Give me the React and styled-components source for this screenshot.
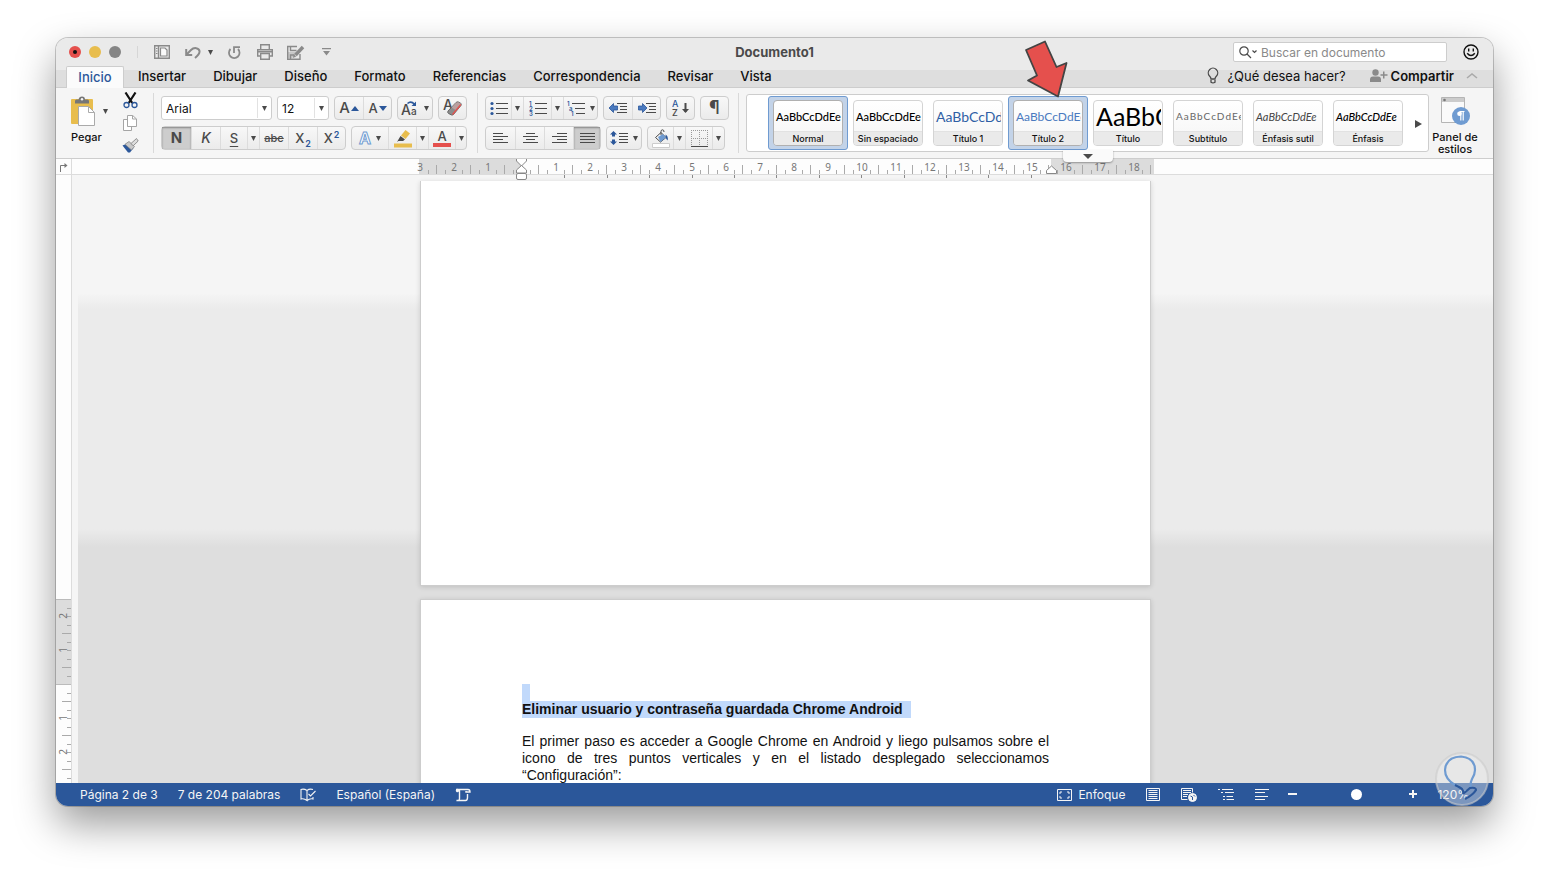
import React from 'react'
import styled, { createGlobalStyle, css } from 'styled-components'

const colors = {
  blue: '#2b579a',
  light: '#6f9bd1',
  ink: '#4a4a4a',
  grey: '#8a8a8a',
  line: '#cdcdcd',
  yellow: '#e8bd4d',
  red: '#e5504d',
}

const GlobalStyle = createGlobalStyle`
  * { box-sizing: border-box; }
  body {
    margin: 0;
    background: #fff;
    color: #111;
    font-family: Inter, "Liberation Sans", sans-serif;
  }
  button, input, select { font-family: inherit; }
  button {
    padding: 0;
    border: 0;
    background: none;
    color: inherit;
  }
  svg { display: block; flex: none; }
`

const Desktop = styled.div`
  display: flex;
  height: 100vh;
  padding: 38px 56px 74px;
`

const Window = styled.div`
  position: relative;
  display: flex;
  flex: 1;
  flex-direction: column;
  min-width: 0;
  overflow: hidden;
  border-radius: 12px;
  background: #f5f5f5;
  box-shadow: 0 0 0 1px rgba(0, 0, 0, 0.2), 0 18px 40px rgba(0, 0, 0, 0.4);
`

/* title bar */

const TitleBar = styled.header`
  display: grid;
  grid-template-columns: 1fr auto 1fr;
  align-items: center;
  height: 28px;
  background: #eaeaea;
`

const TitleLeft = styled.div`
  display: flex;
  align-items: center;
  padding-left: 13px;
`

const TitleRight = styled.div`
  display: flex;
  align-items: center;
  justify-content: flex-end;
  gap: 16px;
  padding-right: 14px;
`

const Lights = styled.div`
  display: flex;
  gap: 8px;
  padding-right: 16px;
  margin-right: 16px;
  border-right: 1px solid #d6d6d6;
`

const Light = styled.button`
  display: flex;
  align-items: center;
  justify-content: center;
  width: 12px;
  height: 12px;
  border-radius: 50%;
  background: ${props => props.$color};

  &::after {
    content: '';
    width: 4px;
    height: 4px;
    border-radius: 50%;
    background: ${props => (props.$dot ? '#111' : 'transparent')};
  }
`

const QuickBar = styled.div`
  display: flex;
  align-items: center;
  color: ${colors.grey};
`

const QuickButton = styled.button`
  display: flex;
  align-items: center;
  width: ${props => props.$w}px;
  height: 20px;
`

const DocTitle = styled.h1`
  margin: 0;
  color: ${colors.ink};
  font-size: 13px;
  font-weight: 700;
`

const SearchBox = styled.label`
  display: flex;
  align-items: center;
  gap: 4px;
  width: 214px;
  height: 20px;
  padding: 0 5px;
  border: 1px solid ${colors.line};
  border-radius: 2px;
  background: #fff;
`

const SearchInput = styled.input`
  flex: 1;
  min-width: 0;
  padding: 0;
  border: 0;
  outline: 0;
  background: none;
  font-size: 12px;

  &::placeholder { color: ${colors.grey}; }
`

/* tabs */

const TabBar = styled.nav`
  display: flex;
  align-items: stretch;
  height: 22px;
  padding: 0 15px 0 10px;
  border-bottom: 1px solid ${colors.line};
  background: linear-gradient(#eaeaea 4px, #dedede 4px);
`

const Tab = styled.a`
  display: flex;
  align-items: center;
  justify-content: center;
  padding: 0 14px 2px 13px;
  color: #111;
  font-size: 13px;
  font-weight: 500;
  text-decoration: none;

  ${props => props.$active && css`
    width: 58px;
    height: 22px;
    padding: 0 0 2px;
    margin-right: 1px;
    border: 1px solid ${colors.line};
    border-bottom: 0;
    border-radius: 2px 2px 0 0;
    background: #fbfbfb;
    color: ${colors.blue};
  `}
`

const TabTools = styled.div`
  display: flex;
  align-items: center;
  gap: 24px;
  margin-left: auto;
  padding-bottom: 2px;
`

const TabTool = styled.button`
  display: flex;
  align-items: center;
  gap: ${props => props.$gap}px;
  font-size: 13px;
  font-weight: ${props => (props.$strong ? 600 : 400)};
`

const ShareTools = styled.div`
  display: flex;
  align-items: center;
  gap: 12px;
`

/* ribbon */

const Ribbon = styled.section`
  position: relative;
  z-index: 2;
  display: flex;
  height: 71px;
  padding-right: 12px;
  border-bottom: 1px solid ${colors.line};
  background: #f5f5f5;
`

const Section = styled.div`
  display: flex;
  flex-direction: column;
  gap: 6px;
  padding: 8px ${props => props.$right}px 0 7px;
`

const Divider = styled.div`
  width: 1px;
  margin: 5px 0;
  background: #d9d9d9;
`

const Line = styled.div`
  display: flex;
  gap: 5px;
`

const Clipboard = styled.div`
  display: flex;
  align-items: flex-start;
  width: 97px;
  padding-left: 15px;
`

const BigButton = styled.button`
  display: flex;
  flex: none;
  flex-direction: column;
  align-items: ${props => props.$align || 'center'};
  align-self: flex-start;
  gap: 5px;
  width: ${props => props.$w}px;
  padding-top: 8px;
  font-size: 11px;
  font-weight: 500;
  line-height: 12px;
`

const PasteIcons = styled.span`
  display: flex;
  align-items: center;
  gap: 8px;
`

const ClipTools = styled.div`
  display: flex;
  flex-direction: column;
  align-items: center;
  width: 16px;
  gap: 6px;
  padding-top: 4px;
  margin-left: 14px;
`

const Field = styled.label`
  position: relative;
  display: flex;
  width: ${props => props.$w}px;
  height: 24px;
  align-items: center;
  border: 1px solid ${colors.line};
  border-radius: 3px;
  background: #fff;

  svg { position: absolute; right: 4px; pointer-events: none; }
`

const Select = styled.select`
  width: 100%;
  height: 100%;
  padding: 0 16px 0 4px;
  border: 0;
  outline: 0;
  appearance: none;
  background: linear-gradient(#e2e2e2, #e2e2e2) calc(100% - 13px) 50% / 1px 20px no-repeat;
  color: #111;
  font-size: 12px;
`

const Group = styled.div`
  display: flex;
  height: 24px;
  border: 1px solid ${colors.line};
  border-radius: 4px;
  background: linear-gradient(#f8f8f8, #ebebeb);
`

const Tool = styled.button`
  display: flex;
  align-items: center;
  justify-content: center;
  gap: ${props => (props.$tight ? 1 : 5)}px;
  width: ${props => props.$w}px;
  color: ${colors.ink};
  background: ${props => (props.$on ? '#cdcdcd' : 'none')};
  border-left: 1px solid #dcdcdc;
  box-shadow: ${props => (props.$on ? 'inset 0 1px 2px rgba(0, 0, 0, 0.35)' : 'none')};

  &:first-child { border-left: 0; }
`

const Glyph = styled.span`
  font-size: ${props => props.$size || 14}px;
  font-weight: ${props => props.$weight || 500};
  font-style: ${props => (props.$italic ? 'italic' : 'normal')};
  text-decoration: ${props => props.$line || 'none'};
  text-underline-offset: 3px;
  line-height: 16px;

  sub, sup {
    margin-left: 1px;
    color: ${colors.blue};
    font-size: 9px;
    font-weight: 600;
    line-height: 0;
  }
`

const ColorGlyph = styled.span`
  display: flex;
  flex-direction: column;
  align-items: center;
  width: 18px;
  border-bottom: 4px solid ${props => props.$color};
  font-size: 13px;
  font-weight: 500;
  line-height: 14px;
`

const Outlined = styled.span`
  color: #fff;
  font-size: 16px;
  font-weight: 700;
  line-height: 18px;
  -webkit-text-stroke: 1px ${colors.light};
`

/* style gallery */

const Gallery = styled.div`
  display: flex;
  flex: 1;
  min-width: 0;
  height: 58px;
  margin: 6px 0 0 7px;
  padding: 1px 0 0 21px;
  border: 1px solid ${colors.line};
  border-radius: 3px;
  background: #fff;
`

const Cell = styled.div`
  position: relative;
  flex: none;
  width: 80px;
  height: 54px;
  padding: 3px 4px;
  border: 1px solid ${props => (props.$on ? colors.light : 'transparent')};
  border-radius: 3px;
  background: ${props => (props.$on ? '#c3d3e8' : 'none')};
`

const Card = styled.button`
  display: flex;
  flex-direction: column;
  width: 70px;
  height: 46px;
  overflow: hidden;
  border: 1px solid ${props => (props.$on ? '#b0b0b0' : '#d4d4d4')};
  border-radius: 4px;
  background: linear-gradient(#fff, #f5f5f5);
`

const Preview = styled.span`
  display: flex;
  flex: none;
  align-items: center;
  width: 67px;
  height: 30px;
  padding-left: 2px;
  overflow: hidden;
  color: ${props => props.$color || '#000'};
  font-family: Lato, "Liberation Sans", sans-serif;
  font-size: ${props => props.$size || 11}px;
  font-weight: ${props => props.$weight || 400};
  font-style: ${props => (props.$italic ? 'italic' : 'normal')};
  letter-spacing: ${props => (props.$spaced ? '1px' : 'normal')};
  white-space: nowrap;
`

const CardName = styled.span`
  width: 100%;
  border-top: 1px solid #e2e2e2;
  background: #eaeaea;
  font-size: 9px;
  font-weight: 500;
  line-height: 14px;
  text-align: center;
  white-space: nowrap;
`

const MoreFlap = styled.button`
  position: absolute;
  top: 53px;
  left: 54px;
  display: flex;
  align-items: center;
  justify-content: center;
  width: 50px;
  height: 12px;
  border-radius: 0 0 4px 4px;
  background: #fafafa;
  box-shadow: 0 1px 2px rgba(0, 0, 0, 0.35);
`

const Pointer = styled.svg`
  position: absolute;
  top: -59px;
  left: 13px;
  z-index: 3;
`

const ScrollRight = styled.button`
  display: flex;
  align-items: center;
  justify-content: center;
  width: 20px;
`

/* rulers and pages */

const RulerRow = styled.div`
  position: relative;
  z-index: 1;
  display: grid;
  grid-template-columns: 16px 1fr;
  height: 16px;
  border-bottom: 1px solid #dcdcdc;
  background: #fdfdfd;
`

const RulerCorner = styled.div`
  display: flex;
  align-items: center;
  justify-content: center;
  border-right: 1px solid #dcdcdc;
`

const RulerTrack = styled.div`
  display: flex;
  justify-content: center;
  padding-left: 8px;
`

const RulerSvg = styled.svg`
  overflow: visible;
  font-family: "Noto Sans", sans-serif;
  font-size: 10px;
`

const Body = styled.div`
  display: grid;
  grid-template-columns: 16px 1fr;
  grid-template-rows: minmax(0, 1fr);
  flex: 1;
  min-height: 0;
`

const SideRuler = styled.div`
  overflow: hidden;
  border-right: 1px solid #dcdcdc;
  background: #fdfdfd;
`

const Canvas = styled.main`
  display: flex;
  flex-direction: column;
  align-items: center;
  gap: 13px;
  margin-left: 6px;
  padding-top: 6px;
  overflow: hidden;
  background: linear-gradient(#f5f5f5 118px, #ebebeb 134px, #ebebeb 354px, #dedede 372px);
`

const Page = styled.article`
  flex: none;
  width: 731px;
  height: ${props => props.$h}px;
  padding: 84px 101px;
  border: 1px solid ${colors.line};
  background: #fff;
  box-shadow: 0 1px 5px rgba(0, 0, 0, 0.14);
  color: #111;
  font-family: "Liberation Sans", Arial, sans-serif;
  font-size: 14px;
  line-height: 17px;

  &:first-child { border-top: 0; }
`

const EmptyLine = styled.div`
  width: 8px;
  height: 17px;
  background: #c1d9fb;
`

const Heading = styled.h2`
  margin: 0 0 15px;
  font-size: 14px;
  line-height: 17px;

  span {
    display: inline-block;
    padding-right: 8px;
    background: #c1d9fb;
  }
`

const Paragraph = styled.p`
  margin: 0;
  text-align: justify;
`

/* status bar */

const StatusBar = styled.footer`
  display: flex;
  align-items: center;
  justify-content: space-between;
  height: 23px;
  padding: 0 24px;
  background: ${colors.blue};
  color: #f5f5f5;
  font-size: 12px;
`

const StatusSide = styled.div`
  display: flex;
  align-items: center;
  gap: ${props => props.$gap}px;
`

const StatusButton = styled.button`
  display: flex;
  align-items: center;
  gap: 6px;
  font-size: 12px;
`

const Zoom = styled.div`
  display: flex;
  align-items: center;
  gap: 2px;
  margin: 0 -2px;
`

const ZoomSlider = styled.input`
  width: 108px;
  height: 12px;
  margin: 0;
  appearance: none;
  background: none;

  &::-webkit-slider-thumb {
    width: 11px;
    height: 11px;
    appearance: none;
    border-radius: 50%;
    background: #fff;
  }
`

const Badge = styled.svg`
  position: absolute;
  right: 4px;
  bottom: 0;
  z-index: 4;
`

/* icons */

const Caret = ({ w = 6, fill = colors.ink }) => (
  <svg width={w} height="5" viewBox="0 0 6 5" preserveAspectRatio="none"><path d="M0 0h6L3 5z" fill={fill} /></svg>
)

const Stroke = ({ w = 16, h = 16, color = 'currentColor', sw = 1.4, children }) => (
  <svg width={w} height={h} viewBox={`0 0 ${w} ${h}`} fill="none" stroke={color} strokeWidth={sw}>{children}</svg>
)

const SidebarIcon = () => (
  <Stroke w={16} h={14}>
    <path d="M.7.7h14.6v12.6H.7zM4.500 1v12" />
    <path d="M6.500 3h4.500l2 2v6H6.500z" fill="#fafafa" strokeWidth="1.200" />
    <path d="M2 3.500h1.500M2 6h1.500M2 8.500h1.500" strokeWidth="1" />
  </Stroke>
)

const UndoIcon = () => (
  <Stroke w={16} h={13} sw={2}>
    <path d="M2 8l4-4c3-3 8-2.200 8.500 1 .4 2.300-1.500 4.500-4.500 7" />
    <path d="M1.200 3v6h6" />
  </Stroke>
)

const RedoIcon = () => (
  <Stroke w={14} h={15} sw={1.8}>
    <path d="M3.500 4a5.300 5.300 0 1 0 7.500 0" />
    <path d="M7 8V2.200h6" />
  </Stroke>
)

const PrintIcon = () => (
  <Stroke w={16} h={16}>
    <path d="M3.700 5.500V.7h8.600v4.800M3.500 12H.7V5.700h14.600V12h-2.800M3.700 9.500h8.600v5.800H3.700z" />
    <path d="M1 7.800h14" strokeWidth="1.500" />
  </Stroke>
)

const SaveEditIcon = () => (
  <Stroke w={18} h={15}>
    <path d="M13 9v5.300H.7V1.500H10M3.500 1.500v4h6M3.500 14v-4h4" />
    <path d="M1 7h8l-4 6H1z" fill="currentColor" fillOpacity=".35" stroke="none" />
    <path d="M8.500 10l7.500-8" strokeWidth="3.400" />
    <path d="M6 12.500l1-3 2 2z" fill="currentColor" strokeWidth=".5" />
  </Stroke>
)

const PasteIcon = () => (
  <svg width="24" height="30" viewBox="0 0 24 30">
    <rect x="0" y="3" width="22" height="25" rx="1" fill={colors.yellow} />
    <path d="M4 7.500V5q0-1.500 1.500-1.500h2C8 1.500 9 .5 11 .5s3 1 3 3h2.500Q18 3.500 18 5v2.500z" fill="#777" />
    <circle cx="11" cy="3.200" r="1.200" fill="#f5f5f5" />
    <path d="M7.500 10.500h10l6 6v13h-16z" fill="#fff" stroke="#aaa" />
    <path d="M17.500 10.500v6h6" fill="none" stroke="#aaa" />
  </svg>
)

const CutIcon = () => (
  <svg width="15" height="17" viewBox="0 0 15 17" fill="none">
    <path d="M2.500.5l6.800 10.500M12.500.5L5.700 11" stroke="#111" strokeWidth="2.200" />
    <circle cx="3.500" cy="13" r="2.500" stroke={colors.blue} strokeWidth="1.300" />
    <circle cx="11.500" cy="13" r="2.500" stroke={colors.blue} strokeWidth="1.300" />
  </svg>
)

const CopyIcon = () => (
  <Stroke w={14} h={17} color="#a5a5a5" sw={1}>
    <path d="M.5 4.500H5v7h3.500V15.500H.5z" fill="#fff" />
    <path d="M4.500.5h5.200L13.500 4v7.500h-9z" fill="#fff" />
    <path d="M9.500.5V4h4" />
  </Stroke>
)

const BrushIcon = () => (
  <svg width="17" height="15" viewBox="0 0 17 15">
    <path d="M.5 7.500l6-2.500 5 5-3.500 4.500H6z" fill={colors.blue} />
    <path d="M3 6.300l4-2.800 5.500 5L9.500 12z" fill="#c9c9c9" stroke="#888" strokeWidth=".8" />
    <path d="M9 5.500l5.500-5L16.200 3l-5 4.800z" fill="#ddd" stroke="#888" strokeWidth=".9" />
  </svg>
)

const GrowIcon = ({ down }) => (
  <svg width="8" height="5" viewBox="0 0 8 5"><path d={down ? 'M0 0h8L4 5z' : 'M0 5h8L4 0z'} fill={colors.blue} /></svg>
)

const CaseIcon = () => (
  <svg width="18" height="17" viewBox="0 0 18 17" fill={colors.ink}>
    <text x="0" y="15" fontSize="14" fontWeight="500">A</text>
    <text x="10" y="15" fontSize="10" fontWeight="500">a</text>
    <path d="M6.500 3.500q3.500-3 7 .8" fill="none" stroke={colors.blue} strokeWidth="1.600" />
    <path d="M15 1.500v4.500h-4.500z" fill={colors.blue} />
  </svg>
)

const EraserIcon = () => (
  <svg width="22" height="20" viewBox="0 0 22 20">
    <text x="1" y="12" fontSize="14" fontWeight="500" fill={colors.ink}>A</text>
    <path d="M6 13l8-8.500q1-1 2.500-.5l2 1q1.300 1 .5 2.500l-7.500 9q-.8.800-2 .5l-3-1.500Q5 14.300 6 13z" fill="#8c8c8c" stroke="#555" strokeWidth=".8" />
    <path d="M9.500 9.500L14 4.800q1-1 2.500-.5l2 1q1.200 1 .3 2.200l-4.300 5z" fill="#b9a0a0" />
    <path d="M10.500 16.500l8.300-10" stroke={colors.red} strokeWidth="1.200" />
  </svg>
)

const PenIcon = () => (
  <svg width="18" height="19" viewBox="0 0 18 19">
    <path d="M7 6.500L11.500 1l4.500 3.500-4.500 5.500z" fill={colors.yellow} />
    <path d="M6.500 7l4.500 3.500-2 1.500H4.500l-1.500 1z" fill={colors.ink} />
    <path d="M0 14.500h18v4H0z" fill={colors.yellow} />
  </svg>
)

const ListIcon = ({ kind }) => (
  <svg width="18" height="15" viewBox="0 0 18 15" fill={colors.blue} fontSize="6" fontWeight="600">
    {kind === 'bullet' && [2, 7, 12].map(y => <circle key={y} cx="2" cy={y + 0.5} r="1.600" />)}
    {kind === 'number' && [1, 2, 3].map(n => <text key={n} x="0" y={n * 5 - 0.5}>{n}</text>)}
    {kind === 'multi' && (
      <>
        <text x="0" y="4.500">1</text>
        <text x="2" y="9.500">a</text>
        <text x="4" y="15">1</text>
      </>
    )}
    <path
      d={kind === 'multi' ? 'M5 2.500h13M8 7.500h10M9 12.500h9' : 'M6 2.500h12M6 7.500h12M6 12.500h12'}
      stroke={colors.ink}
      strokeWidth="1"
    />
  </svg>
)

const IndentIcon = ({ right }) => (
  <svg width="18" height="12" viewBox="0 0 18 12">
    <path d={right ? 'M9 6L4.500 1.500V4H.5v4h4v2.500z' : 'M0 6l4.500-4.500V4h4v4h-4v2.500z'} fill="#4a7abf" stroke={colors.blue} strokeWidth=".8" />
    <path d="M8 1.500h10M11 4.500h7M11 7.500h7M8 10.500h10" stroke={colors.ink} />
  </svg>
)

const SortIcon = () => (
  <svg width="17" height="18" viewBox="0 0 17 18">
    <text x="0" y="8" fontSize="9" fontWeight="500" fill={colors.blue}>A</text>
    <text x="0" y="17" fontSize="9" fontWeight="500" fill={colors.ink}>Z</text>
    <path d="M13.500 4v9" stroke={colors.ink} strokeWidth="2" />
    <path d="M10 10h7l-3.500 4z" fill={colors.ink} />
  </svg>
)

const alignPaths = {
  left: 'M0 1.500h10M0 4.500h15M0 7.500h10M0 10.500h15',
  center: 'M3 1.500h9M0 4.500h15M3 7.500h9M0 10.500h15',
  right: 'M5 1.500h10M0 4.500h15M5 7.500h10M0 10.500h15',
  justify: 'M0 1.500h15M0 4.500h15M0 7.500h15M0 10.500h15',
}

const AlignIcon = ({ kind }) => (
  <Stroke w={15} h={12} sw={1}><path d={alignPaths[kind]} /></Stroke>
)

const SpacingIcon = () => (
  <svg width="18" height="14" viewBox="0 0 18 14">
    <path d="M3.500 0L7 3.500H5v2H2v-2H0zM3.500 14L7 10.500H5v-2H2v2H0z" fill={colors.blue} />
    <path d="M9 2.500h9M9 5.500h9M9 8.500h9M9 11.500h9" stroke={colors.ink} />
  </svg>
)

const BucketIcon = () => (
  <svg width="18" height="19" viewBox="0 0 18 19">
    <path d="M3.500 8.500l5.500-5 5 5-5.500 4.500z" fill="#f5f5f5" stroke={colors.ink} strokeWidth="1" />
    <path d="M6 8l5-3 3 3.500-5.500 4.500z" fill={colors.light} />
    <path d="M9 6V2.500Q9 .8 10.500.8T12 3" fill="none" stroke={colors.ink} />
    <path d="M13.500 5.500q3 1.500 2.200 6-1.700-1-2-3.500z" fill={colors.blue} />
    <path d="M.5 14.500h17v4H.5z" fill="#fff" stroke="#ccc" />
  </svg>
)

const BorderIcon = () => (
  <svg width="17" height="17" viewBox="0 0 17 17" fill="none">
    <path d="M.5 0v15M8.500 0v15M16.500 0v15M0 .5h17M0 8.500h17" stroke="#999" strokeDasharray="1 1" />
    <path d="M0 16.500h17" stroke={colors.ink} />
  </svg>
)

const StylesPaneIcon = () => (
  <svg width="30" height="30" viewBox="0 0 30 30">
    <path d="M1.500 1.500h23v25h-23z" fill="#fafafa" stroke="#b5b5b5" />
    <path d="M2 2h22v4H2z" fill="#ccc" />
    <circle cx="4.500" cy="4" r="1.300" fill="#777" />
    <circle cx="21" cy="20" r="9" fill={colors.light} />
    <path d="M19.500 15.500h5M20.800 15.500v9M23.200 15.500v9" stroke="#fff" strokeWidth="1.200" />
    <circle cx="19.500" cy="17.800" r="2.300" fill="#fff" />
  </svg>
)

const SearchIcon = () => (
  <Stroke w={18} h={13} color={colors.ink} sw={1.2}>
    <circle cx="5" cy="5" r="4.200" />
    <path d="M8 8l4 4M13.500 4.500l2 2 2-2" />
  </Stroke>
)

const SmileIcon = () => (
  <Stroke w={16} h={16} color="#111" sw={1.400}>
    <circle cx="8" cy="8" r="7" />
    <path d="M5.700 4.500v3M10.300 4.500v3M4.200 9.300q3.800 4.500 7.600 0" />
  </Stroke>
)

const BulbIcon = () => (
  <Stroke w={12} h={17} color={colors.ink} sw={1.300}>
    <path d="M4 12Q4 10.500 2.500 9A4.700 4.700 0 1 1 9.500 9Q8 10.500 8 12z" />
    <path d="M4 13v2.200q2 1.300 4 0V13" />
  </Stroke>
)

const ShareIcon = () => (
  <svg width="18" height="13" viewBox="0 0 18 13" fill={colors.grey}>
    <circle cx="5.500" cy="3.500" r="3.200" />
    <path d="M0 13v-2.500Q0 7.500 3 7.500h5q3 0 3 3V13zM13 2.500h1.500v7H13z" />
    <path d="M10.500 5.200h7v1.500h-7z" />
  </svg>
)

const BookIcon = () => (
  <Stroke w={16} h={14} sw={1.1}>
    <path d="M7 2.500Q4 .5 1 1.500v9.500q3-.8 6 1.500zM7 2.500Q9.500.5 13 1.500M7 12.500q3-2.300 6-1.500v-2M8.500 6l2 2L15.500 3" />
  </Stroke>
)

const TrackIcon = () => (
  <Stroke w={16} h={14} sw={1.400}>
    <path d="M1 1.500h7M4.500 1.500v9q0 2.500-3 2h9q2 0 2-3V6M8 1.500h5q2 0 2 2.500h-4V3" />
    <circle cx="2.500" cy="2.500" r="1" fill="currentColor" />
  </Stroke>
)

const FocusIcon = () => (
  <Stroke w={15} h={12} sw={1}>
    <path d="M.5.5h14v11H.5z" />
    <path d="M3 5V3h2M10 3h2v2M12 7v2h-2M5 9H3V7" />
  </Stroke>
)

const PrintViewIcon = () => (
  <Stroke w={14} h={13} sw={1}>
    <path d="M.5.500h13v12H.5zM2.500 2.500h9M2.500 4.500h9M2.500 6.500h9M2.500 8.500h9M2.500 10.500h9" />
  </Stroke>
)

const WebViewIcon = () => (
  <Stroke w={16} h={14} sw={1}>
    <path d="M6.500 11.500h-6V.5h11v4M2 2.500h8M2 4.500h8M2 6.500h5M2 8.500h4" />
    <circle cx="11.500" cy="9.500" r="4" fill="#f5f5f5" />
    <path d="M9.500 8l2 1v3M12.500 7l1.500 1.500" stroke={colors.blue} />
  </Stroke>
)

const OutlineIcon = () => (
  <Stroke w={16} h={11} sw={1}>
    <path d="M0 .5h2M4 .5h11M3 3.500h2M7 3.500h9M5 7.500h2M8.500 7.500H15M5 10.500h2M8.500 10.500H16" />
  </Stroke>
)

const DraftIcon = () => (
  <Stroke w={14} h={11} sw={1}>
    <path d="M0 .5h14M0 3.500h10M0 7.500h13M0 10.500h10" />
  </Stroke>
)

const styleList = [
  { name: 'Normal', on: true, weight: 500 },
  { name: 'Sin espaciado', weight: 500 },
  { name: 'Título 1', color: '#2f5fa5', size: 14 },
  { name: 'Título 2', color: '#4a7abf', size: 12, on: true, pointed: true },
  { name: 'Título', size: 25 },
  { name: 'Subtítulo', color: '#666', size: 10, spaced: true },
  { name: 'Énfasis sutil', color: '#444', italic: true },
  { name: 'Énfasis', italic: true, weight: 500 },
]

const tabs = ['Inicio', 'Insertar', 'Dibujar', 'Diseño', 'Formato', 'Referencias', 'Correspondencia', 'Revisar', 'Vista']

// one centimetre on the rulers is 34px, with a tick every quarter
const STEP = 34 / 4

const HorizontalRuler = () => {
  const origin = 102
  const ticks = []
  for (let i = -12; i <= 74; i++) ticks.push(i)
  return (
    <RulerSvg width="735" height="15" viewBox="0 0 735 15">
      <rect width="102" height="15" fill="#dcdcdc" />
      <rect x="632" width="103" height="15" fill="#dcdcdc" />
      {ticks.map(i => {
        const x = origin + i * STEP
        if (i === 0) return null
        if (i % 4 === 0) {
          return <text key={i} x={x + 1} y="12" textAnchor="middle" fill="#777">{Math.abs(i / 4)}</text>
        }
        return <path key={i} d={`M${Math.round(x) + 0.5} ${i % 2 === 0 ? 6 : 11}V15`} stroke="#aaa" />
      })}
      {[...Array(12)].map((_, i) => (
        <path key={i} d={`M${Math.round(origin + (i + 1) * 42.4) + 1.5} 16v3`} stroke="#888" />
      ))}
      <path d="M97.500 0v2l5 5 5-5V0M97.500 14v-3l5-4.500 5 4.500v3z" fill="#fff" stroke="#888" />
      <rect x="97.500" y="14.500" width="10" height="6" rx="1.500" fill="#fff" stroke="#888" />
      <path d="M627.500 14.500v-3l5-4.500 5 4.500v3z" fill="#fff" stroke="#888" />
    </RulerSvg>
  )
}

const VerticalRuler = () => {
  const origin = 509
  const ticks = []
  for (let i = -9; i <= 40; i++) ticks.push(i)
  return (
    <RulerSvg width="15" height="900" viewBox="0 0 15 900">
      <rect y="424" width="15" height="85" fill="#dcdcdc" />
      <path d="M0 424.500h15M0 509.500h15" stroke="#bbb" />
      {ticks.map(i => {
        const y = origin + i * STEP
        return (
          <g key={i}>
            {i !== 0 && (
              <path d={`M15 ${Math.round(y) + 0.5}h${i % 4 !== 0 && i % 2 === 0 ? -9 : -4}`} stroke="#aaa" />
            )}
            {i % 4 === 0 && i !== 0 && (
              <text transform={`translate(11 ${y}) rotate(-90)`} textAnchor="middle" fill="#777">{Math.abs(i / 4)}</text>
            )}
          </g>
        )
      })}
    </RulerSvg>
  )
}

const FontSection = () => (
  <Section $right={10}>
    <Line>
      <Field $w={111}>
        <Select aria-label="Fuente" defaultValue="Arial"><option>Arial</option></Select>
        <Caret w={5} />
      </Field>
      <Field $w={52}>
        <Select aria-label="Tamaño de fuente" defaultValue="12"><option>12</option></Select>
        <Caret w={5} />
      </Field>
      <Group>
        <Tool $w={28} $tight aria-label="Aumentar tamaño"><Glyph $size={15}>A</Glyph><GrowIcon /></Tool>
        <Tool $w={28} $tight aria-label="Disminuir tamaño"><Glyph $size={13}>A</Glyph><GrowIcon down /></Tool>
      </Group>
      <Group><Tool $w={34} aria-label="Cambiar mayúsculas"><CaseIcon /><Caret w={5} /></Tool></Group>
      <Group><Tool $w={27} aria-label="Borrar formato"><EraserIcon /></Tool></Group>
    </Line>
    <Line>
      <Group>
        <Tool $w={29} $on aria-label="Negrita"><Glyph $size={15} $weight={700}>N</Glyph></Tool>
        <Tool $w={29} aria-label="Cursiva"><Glyph $italic>K</Glyph></Tool>
        <Tool $w={27} aria-label="Subrayado"><Glyph $size={13} $line="underline">S</Glyph></Tool>
        <Tool $w={12} aria-label="Opciones de subrayado"><Caret w={5} /></Tool>
        <Tool $w={29} aria-label="Tachado"><Glyph $size={11} $line="line-through">abc</Glyph></Tool>
        <Tool $w={29} aria-label="Subíndice"><Glyph $size={13}>X<sub>2</sub></Glyph></Tool>
        <Tool $w={28} aria-label="Superíndice"><Glyph $size={13}>X<sup>2</sup></Glyph></Tool>
      </Group>
      <Group>
        <Tool $w={36} aria-label="Efectos de texto"><Outlined>A</Outlined><Caret w={5} /></Tool>
        <Tool $w={28} aria-label="Resaltado"><PenIcon /></Tool>
        <Tool $w={12} aria-label="Color de resaltado"><Caret w={5} /></Tool>
        <Tool $w={27} aria-label="Color de fuente"><ColorGlyph $color={colors.red}>A</ColorGlyph></Tool>
        <Tool $w={11} aria-label="Más colores"><Caret w={5} /></Tool>
      </Group>
    </Line>
  </Section>
)

const ParagraphSection = () => (
  <Section $right={9}>
    <Line>
      <Group>
        <Tool $w={25} aria-label="Viñetas"><ListIcon kind="bullet" /></Tool>
        <Tool $w={12} aria-label="Opciones de viñetas"><Caret w={5} /></Tool>
        <Tool $w={28} aria-label="Numeración"><ListIcon kind="number" /></Tool>
        <Tool $w={12} aria-label="Opciones de numeración"><Caret w={5} /></Tool>
        <Tool $w={34} aria-label="Lista multinivel"><ListIcon kind="multi" /><Caret w={5} /></Tool>
      </Group>
      <Group>
        <Tool $w={28} aria-label="Disminuir sangría"><IndentIcon /></Tool>
        <Tool $w={28} aria-label="Aumentar sangría"><IndentIcon right /></Tool>
      </Group>
      <Group><Tool $w={27} aria-label="Ordenar"><SortIcon /></Tool></Group>
      <Group><Tool $w={27} aria-label="Mostrar marcas"><Glyph $size={18}>¶</Glyph></Tool></Group>
    </Line>
    <Line>
      <Group>
        <Tool $w={29} aria-label="Alinear a la izquierda"><AlignIcon kind="left" /></Tool>
        <Tool $w={29} aria-label="Centrar"><AlignIcon kind="center" /></Tool>
        <Tool $w={29} aria-label="Alinear a la derecha"><AlignIcon kind="right" /></Tool>
        <Tool $w={27} $on aria-label="Justificar"><AlignIcon kind="justify" /></Tool>
      </Group>
      <Group><Tool $w={34} aria-label="Interlineado"><SpacingIcon /><Caret w={5} /></Tool></Group>
      <Group>
        <Tool $w={25} aria-label="Sombreado"><BucketIcon /></Tool>
        <Tool $w={12} aria-label="Opciones de sombreado"><Caret w={5} /></Tool>
        <Tool $w={27} aria-label="Bordes"><BorderIcon /></Tool>
        <Tool $w={12} aria-label="Opciones de bordes"><Caret w={5} /></Tool>
      </Group>
    </Line>
  </Section>
)

const StyleGallery = () => (
  <Gallery>
    {styleList.map(item => (
      <Cell key={item.name} $on={item.on}>
        <Card $on={item.on}>
          <Preview $color={item.color} $size={item.size} $weight={item.weight} $italic={item.italic} $spaced={item.spaced}>
            AaBbCcDdEe
          </Preview>
          <CardName>{item.name}</CardName>
        </Card>
        {item.pointed && (
          <>
            <MoreFlap aria-label="Más estilos"><Caret w={10} /></MoreFlap>
            <Pointer width="46" height="62" viewBox="0 0 46 62">
              <path d="M4 12L23 3.500 34.500 29l10-4L36 58.500 6 42.500l9-5z" fill={colors.red} stroke="#444" strokeWidth="1.800" strokeLinejoin="round" />
            </Pointer>
          </>
        )}
      </Cell>
    ))}
    <ScrollRight aria-label="Siguiente">
      <svg width="7" height="8" viewBox="0 0 7 8"><path d="M0 0l7 4-7 4z" fill={colors.ink} /></svg>
    </ScrollRight>
  </Gallery>
)

const App = () => (
  <>
    <GlobalStyle />
    <Desktop>
      <Window>
        <TitleBar>
          <TitleLeft>
            <Lights>
              <Light $color={colors.red} $dot aria-label="Cerrar" />
              <Light $color={colors.yellow} aria-label="Minimizar" />
              <Light $color="#858585" aria-label="Maximizar" />
            </Lights>
            <QuickBar>
              <QuickButton $w={31} aria-label="Barra lateral"><SidebarIcon /></QuickButton>
              <QuickButton $w={23} aria-label="Deshacer"><UndoIcon /></QuickButton>
              <QuickButton $w={19} aria-label="Opciones de deshacer"><Caret w={5} /></QuickButton>
              <QuickButton $w={30} aria-label="Rehacer"><RedoIcon /></QuickButton>
              <QuickButton $w={30} aria-label="Imprimir"><PrintIcon /></QuickButton>
              <QuickButton $w={35} aria-label="Guardar"><SaveEditIcon /></QuickButton>
              <QuickButton $w={10} aria-label="Personalizar">
                <svg width="9" height="8" viewBox="0 0 9 8" fill="currentColor"><path d="M0 0h9v1.300H0zM1 3h7L4.500 7.500z" /></svg>
              </QuickButton>
            </QuickBar>
          </TitleLeft>
          <DocTitle>Documento1</DocTitle>
          <TitleRight>
            <SearchBox>
              <SearchIcon />
              <SearchInput type="text" aria-label="Buscar en documento" placeholder="Buscar en documento" />
            </SearchBox>
            <button aria-label="Comentarios"><SmileIcon /></button>
          </TitleRight>
        </TitleBar>

        <TabBar>
          {tabs.map(tab => <Tab key={tab} href="#" $active={tab === 'Inicio'}>{tab}</Tab>)}
          <TabTools>
            <TabTool $gap={8}><BulbIcon />¿Qué desea hacer?</TabTool>
            <ShareTools>
              <TabTool $gap={3} $strong><ShareIcon />Compartir</TabTool>
              <TabTool aria-label="Contraer">
                <Stroke w={12} h={6} color="#aaa" sw={1.6}><path d="M1 5l5-4 5 4" /></Stroke>
              </TabTool>
            </ShareTools>
          </TabTools>
        </TabBar>

        <Ribbon>
          <Clipboard>
            <BigButton $w={37} $align="flex-start">
              <PasteIcons><PasteIcon /><Caret w={5} /></PasteIcons>
              Pegar
            </BigButton>
            <ClipTools>
              <button aria-label="Cortar"><CutIcon /></button>
              <button aria-label="Copiar"><CopyIcon /></button>
              <button aria-label="Copiar formato"><BrushIcon /></button>
            </ClipTools>
          </Clipboard>
          <Divider />
          <FontSection />
          <Divider />
          <ParagraphSection />
          <Divider />
          <StyleGallery />
          <BigButton $w={52}>
            <StylesPaneIcon />
            <span>Panel de<br />estilos</span>
          </BigButton>
        </Ribbon>

        <RulerRow>
          <RulerCorner>
            <Stroke w={8} h={10} color="#777" sw={1}><path d="M.5 10V3.500H5" /><path d="M4.500 1l3 2.500-3 2.500z" fill="#777" stroke="none" /></Stroke>
          </RulerCorner>
          <RulerTrack><HorizontalRuler /></RulerTrack>
        </RulerRow>

        <Body>
          <SideRuler><VerticalRuler /></SideRuler>
          <Canvas>
            <Page $h={405} />
            <Page $h={900}>
              <EmptyLine />
              <Heading><span>Eliminar usuario y contraseña guardada Chrome Android</span></Heading>
              <Paragraph>
                El primer paso es acceder a Google Chrome en Android y liego pulsamos sobre el icono de tres
                puntos verticales y en el listado desplegado seleccionamos “Configuración”:
              </Paragraph>
            </Page>
          </Canvas>
        </Body>

        <StatusBar>
          <StatusSide $gap={20}>
            <span>Página 2 de 3</span>
            <span>7 de 204 palabras</span>
            <StatusButton aria-label="Revisión"><BookIcon /></StatusButton>
            <span>Español (España)</span>
            <StatusButton aria-label="Control de cambios"><TrackIcon /></StatusButton>
          </StatusSide>
          <StatusSide $gap={21}>
            <StatusButton><FocusIcon />Enfoque</StatusButton>
            <StatusButton aria-label="Diseño de impresión"><PrintViewIcon /></StatusButton>
            <StatusButton aria-label="Diseño web"><WebViewIcon /></StatusButton>
            <StatusButton aria-label="Esquema"><OutlineIcon /></StatusButton>
            <StatusButton aria-label="Borrador"><DraftIcon /></StatusButton>
            <Zoom>
              <StatusButton aria-label="Alejar"><Stroke w={9} h={9} sw={2}><path d="M0 4h9" /></Stroke></StatusButton>
              <ZoomSlider type="range" aria-label="Zoom" min="0" max="100" defaultValue="53" />
              <StatusButton aria-label="Acercar"><Stroke w={9} h={9} sw={2}><path d="M0 4h8M4 0v8" /></Stroke></StatusButton>
            </Zoom>
            <span>120%</span>
          </StatusSide>
        </StatusBar>

        <Badge width="54" height="54" viewBox="0 0 54 54" fill="none">
          <circle cx="27" cy="27" r="26" fill="#f5f5f5" fillOpacity=".4" stroke="#ccc" strokeOpacity=".6" strokeWidth="2" />
          <path d="M27 37Q25 35 20 33 10 27 10 18 11 5 26 4.500 40 6 40 18 40 22 37 27 35 31 36 36" stroke={colors.light} strokeWidth="2.200" />
          <path d="M20 33q6 3 7 4 2 3 1 5l7-6q6-1 6 2-3 5-11 9" stroke={colors.blue} strokeWidth="2.200" />
        </Badge>
      </Window>
    </Desktop>
  </>
)

export default App
